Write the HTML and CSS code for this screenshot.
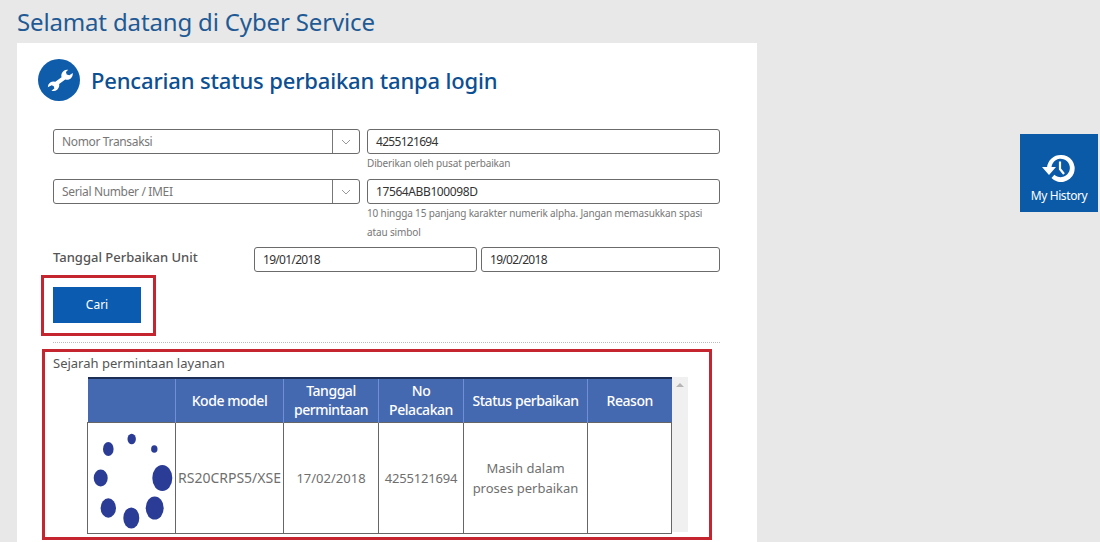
FILE: index.html
```html
<!DOCTYPE html>
<html lang="id">
<head>
<meta charset="utf-8">
<title>Cyber Service</title>
<link rel="stylesheet" href="styles.css">
</head>
<body>
<main class="page">
  <h1 class="page-title">Selamat datang di Cyber Service</h1>
  <section class="card">
    <header class="card-head">
      <span class="head-icon">
        <svg viewBox="0 0 42 42" width="42" height="42"><path transform="translate(2.500 2.500) scale(.88)" d="M31.500 9.500a6.600 6.600 0 0 0-7.600 8.300L16.800 23a6.600 6.600 0 0 0-8.500 6.200l4.300-2.300 2.500 1.200.6 2.700-3.300 2.300a6.600 6.600 0 0 0 8.800-7.400l6.900-5.200a6.600 6.600 0 0 0 8.500-7.300l-3.800 2.500-3-.9-.9-2.900z" fill="#fff"/></svg>
      </span>
      <h2 class="card-title">Pencarian status perbaikan tanpa login</h2>
    </header>
    <form class="form">
      <div class="search-row">
        <div class="select"><span class="select-text">Nomor Transaksi</span><span class="select-arrow"><svg viewBox="0 0 10 6" width="10" height="6"><path d="M1 1l4 4 4-4" fill="none" stroke="#999" stroke-width="1"/></svg></span></div>
        <div class="field">
          <div class="input input-num">4255121694</div>
          <p class="hint">Diberikan oleh pusat perbaikan</p>
        </div>
      </div>
      <div class="search-row">
        <div class="select"><span class="select-text">Serial Number / IMEI</span><span class="select-arrow"><svg viewBox="0 0 10 6" width="10" height="6"><path d="M1 1l4 4 4-4" fill="none" stroke="#999" stroke-width="1"/></svg></span></div>
        <div class="field">
          <div class="input input-serial">17564ABB100098D</div>
          <p class="hint hint-last">10 hingga 15 panjang karakter numerik alpha. Jangan memasukkan spasi atau simbol</p>
        </div>
      </div>
      <div class="date-row">
        <span class="date-label">Tanggal Perbaikan Unit</span>
        <div class="input input-num date-from">19/01/2018</div>
        <div class="input input-num date-to">19/02/2018</div>
      </div>
      <div class="mark mark-button">
        <button class="search-btn" type="button">Cari</button>
      </div>
    </form>
    <div class="divider"></div>
    <div class="mark mark-history">
      <h3 class="history-title">Sejarah permintaan layanan</h3>
      <div class="table-wrap">
        <table class="history">
          <colgroup><col class="c1"><col class="c2"><col class="c3"><col class="c4"><col class="c5"><col class="c6"></colgroup>
          <thead>
            <tr><th></th><th>Kode model</th><th>Tanggal permintaan</th><th>No Pelacakan</th><th>Status perbaikan</th><th>Reason</th></tr>
          </thead>
          <tbody>
            <tr>
              <td class="spin-cell">
                <svg viewBox="0 0 88 110" width="88" height="110">
                  <g fill="#2b3c96">
                    <ellipse cx="43.700" cy="16" rx="4.200" ry="5.300"/>
                    <ellipse cx="20.300" cy="26" rx="5.300" ry="7"/>
                    <ellipse cx="66.300" cy="26" rx="3.200" ry="3.800"/>
                    <ellipse cx="12.700" cy="55" rx="7" ry="8.500"/>
                    <ellipse cx="74.300" cy="55" rx="10" ry="13"/>
                    <ellipse cx="20.300" cy="85" rx="7.700" ry="9.700"/>
                    <ellipse cx="43.300" cy="95" rx="8" ry="10.500"/>
                    <ellipse cx="66.700" cy="85" rx="9" ry="11.500"/>
                  </g>
                </svg>
              </td>
              <td class="cell-model">RS20CRPS5/XSE</td>
              <td>17/02/2018</td>
              <td class="cell-track">4255121694</td>
              <td>Masih dalam proses perbaikan</td>
              <td></td>
            </tr>
          </tbody>
        </table>
        <div class="scrollbar"><span class="scroll-up"></span></div>
      </div>
    </div>
  </section>
</main>
<aside class="my-history">
  <svg viewBox="0 0 34 30" width="34" height="30"><path d="M18.500 1a13.500 13.500 0 0 0-13.400 12H0l7 8 7-8H9.500a9.200 9.200 0 1 1 2.900 7.700l-2.900 3.200A13.500 13.500 0 1 0 18.500 1z" fill="#fff"/><path d="M18 7.500v7.500l4 5" fill="none" stroke="#fff" stroke-width="2.200"/></svg>
  <span>My History</span>
</aside>
</body>
</html>
```
FILE: styles.css
```css
* { box-sizing: border-box; }
html, body { margin: 0; height: 100%; overflow: hidden; }
body { background: #e8e8e8; font-family: "Noto Sans", "Open Sans", sans-serif; color: #555; }
.page { width: 740px; margin-left: 17px; }
.page-title { margin: 0; height: 43px; padding-top: 5px; font-size: 24px; line-height: 34px; font-weight: 400; color: #1f5a94; letter-spacing: -0.15px; }
.card { background: #fff; padding: 16px 37px 0 21px; height: 520px; }
.card-head { display: flex; align-items: center; gap: 11px; height: 42px; margin-bottom: 28px; }
.head-icon { width: 42px; height: 42px; border-radius: 50%; background: #0f5cab; flex: none; }
.head-icon svg { display: block; }
.card-title { margin: 0; font-size: 22px; line-height: 42px; font-weight: 500; color: #0c4f92; white-space: nowrap; letter-spacing: -0.16px; }
.form { margin-left: 15px; }
.search-row { display: flex; gap: 7px; }
.select { width: 307px; height: 25px; flex: none; border: 1px solid #6b6b6b; border-radius: 3px; display: flex; align-items: center; }
.select-text { flex: 1; padding-left: 8px; font-size: 12px; color: #777; letter-spacing: -0.35px; }
.select-arrow { width: 27px; height: 100%; border-left: 1px solid #777; display: flex; align-items: center; justify-content: center; }
.field { flex: 1; }
.input { height: 25px; border: 1px solid #6b6b6b; border-radius: 3px; padding-left: 8px; font-size: 12px; line-height: 23px; color: #333; }
.input-num { letter-spacing: -0.7px; }
.input-serial { letter-spacing: -0.4px; }
.hint { margin: 0 0 6px; font-size: 10px; line-height: 19px; color: #777; letter-spacing: -0.14px; }
.hint-last { margin-bottom: 5px; }
.date-row { display: flex; align-items: flex-start; }
.date-label { width: 201px; font-size: 13px; line-height: 20px; font-weight: 500; color: #555; }
.date-from { width: 223px; margin-right: 4px; }
.date-to { flex: 1; }
.mark { border: 3px solid #c5252f; }
.mark-button { width: 115px; height: 61px; margin: 3px 0 0 -12px; padding: 9px; }
.search-btn { display: block; width: 88px; height: 36px; border: 0; padding: 0 0 2px; background: #0b5cb0; color: #fff; font: 12px "Noto Sans", sans-serif; }
.divider { margin: 6px 0 0 15px; border-top: 1px dotted #bbb; }
.mark-history { width: 670px; height: 191px; margin: 6px 0 0 4px; padding: 1px 0 0 8px; }
.history-title { margin: 0 0 1px; font-size: 13px; line-height: 20px; font-weight: 400; color: #555; }
.table-wrap { display: flex; margin: 4px 0 0 34px; }
.history { border-collapse: collapse; table-layout: fixed; width: 584px; height: 155px; border-top: 2px solid #1c2e55; }
.c1 { width: 88px; } .c2 { width: 108px; } .c3 { width: 95px; } .c4 { width: 85px; } .c5 { width: 124px; } .c6 { width: 84px; }
.history th { height: 44px; background: #4569b0; color: #fff; font-size: 14px; line-height: 19px; font-weight: 500; padding: 0 2px; border-left: 1px solid #6d90d6; letter-spacing: -0.45px; }
.history th:first-child { border-left: 0; }
.history td { height: 109px; padding: 0 2px; border: 1px solid #666; text-align: center; font-size: 13px; line-height: 20px; color: #6f6f6f; }
.history .cell-model { font-size: 14px; padding: 0; white-space: nowrap; }
.history .cell-track { letter-spacing: -0.2px; }
.history .spin-cell { padding: 0; }
.spin-cell svg { display: block; }
.scrollbar { width: 16px; height: 155px; background: #f0f0f0; display: flex; justify-content: center; padding-top: 6px; }
.scroll-up { width: 0; height: 0; border: 4px solid transparent; border-top: 0; border-bottom: 4px solid #b5b5b5; }
.my-history { position: absolute; left: 1020px; top: 134px; width: 78px; height: 78px; background: #0a5aa8; color: #fff; display: flex; flex-direction: column; align-items: center; padding-top: 20px; font-size: 12px; line-height: 16px; letter-spacing: -0.4px; }
.my-history span { margin-top: 4px; white-space: nowrap; }
```
